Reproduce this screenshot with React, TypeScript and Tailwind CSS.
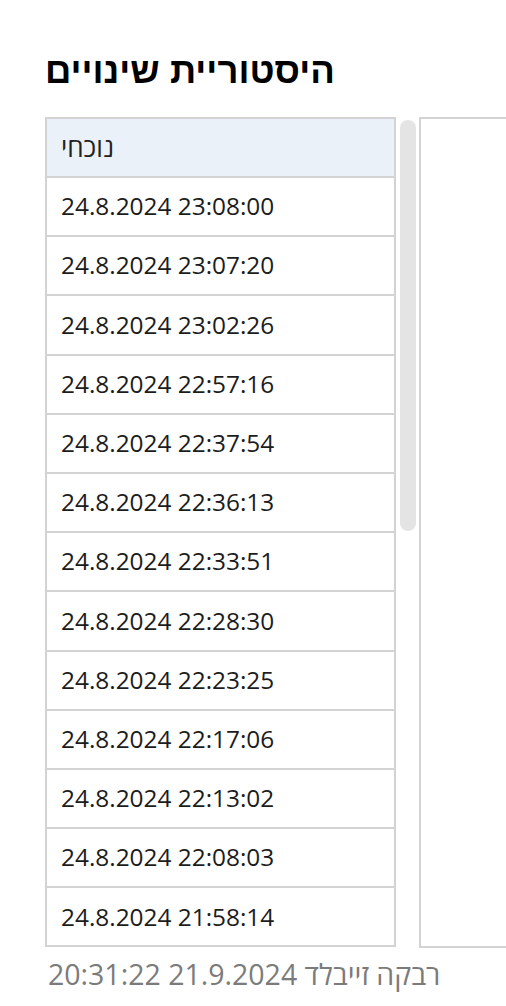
import React from "react";

const rows = [
  "24.8.2024 23:08:00",
  "24.8.2024 23:07:20",
  "24.8.2024 23:02:26",
  "24.8.2024 22:57:16",
  "24.8.2024 22:37:54",
  "24.8.2024 22:36:13",
  "24.8.2024 22:33:51",
  "24.8.2024 22:28:30",
  "24.8.2024 22:23:25",
  "24.8.2024 22:17:06",
  "24.8.2024 22:13:02",
  "24.8.2024 22:08:03",
  "24.8.2024 21:58:14",
];

export default function App() {
  return (
    <div
      className="w-[506px] h-[1006px] overflow-hidden bg-white flex flex-col pl-[45px]"
      style={{ fontFamily: '"Open Sans", "Noto Sans", "DejaVu Sans", sans-serif' }}
    >
      <h1
        dir="rtl"
        className="w-fit mt-[45px] text-[36.5px] leading-[52px] font-bold text-black"
        style={{ fontFamily: '"Liberation Sans", Arial, sans-serif' }}
      >
        היסטוריית שינויים
      </h1>
      <div className="flex flex-row mt-[20px] items-start">
        <div className="w-[351px] shrink-0 border-2 border-b-0 border-[#d3d3d3] flex flex-col">
          <div className="h-[59px] bg-[#ebf1f9] border-b-2 border-[#d3d3d3] flex items-center px-[14px]">
            <span className="text-[26px] text-[#222]">נוכחי</span>
          </div>
          {rows.map((r) => (
            <div
              key={r}
              className="h-[59.2px] border-b-2 border-[#d3d3d3] flex items-center px-[14px]"
            >
              <span dir="ltr" className="text-[24.4px] text-[#1c1c1c]">
                {r}
              </span>
            </div>
          ))}
        </div>
        <div className="w-[24px] shrink-0 flex justify-center pt-[3px]">
          <div className="w-[16px] h-[411px] rounded-full bg-[#e4e4e4]" />
        </div>
        <div className="w-[300px] h-[831px] shrink-0 border-2 border-r-0 border-[#d3d3d3] -ml-[1px]" />
      </div>
      <div
        dir="rtl"
        className="w-fit mt-[6px] ml-[3px] text-[28.5px] leading-[40px] text-[#7b7b7b]"
      >
        רבקה זייבלד 21.9.2024 20:31:22
      </div>
    </div>
  );
}
